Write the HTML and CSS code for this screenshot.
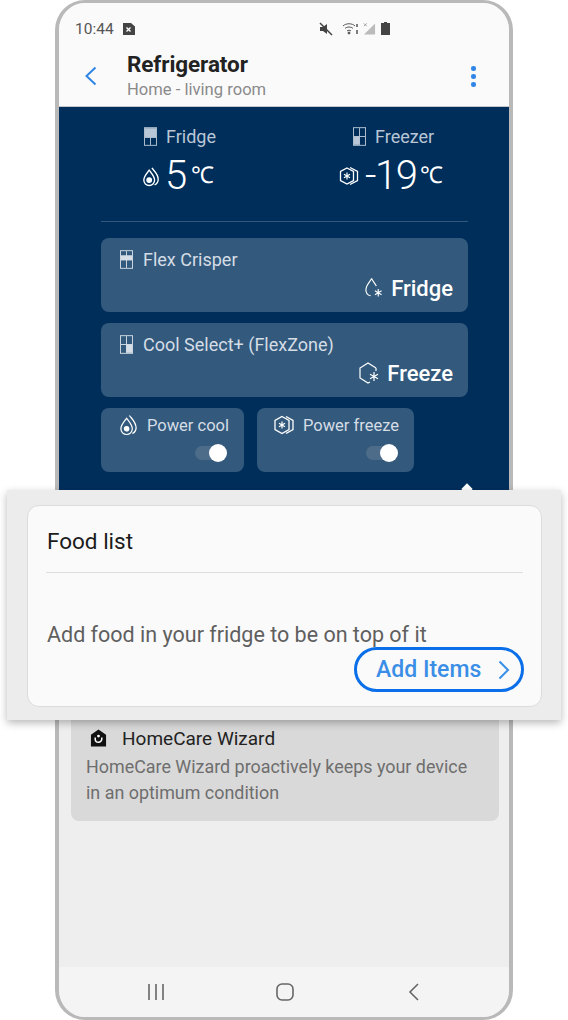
FILE: index.html
```html
<!DOCTYPE html>
<html lang="en">
<head>
<meta charset="utf-8">
<title>Refrigerator</title>
<link rel="stylesheet" href="styles.css">
</head>
<body>
<div class="stage">
  <div class="phone">
    <div class="top">
      <div class="status">
        <div class="status-left">
          <span class="clock">10:44</span>
          <svg class="ic-12" viewBox="0 0 12 12"><path d="M0 0h8l4 3.500V12H0z" fill="#444"/><path d="M3.500 4.500l4 4m0-4l-4 4" stroke="#fff" stroke-width="1.400"/></svg>
        </div>
        <div class="status-right">
          <svg class="ic-mute" viewBox="0 0 14 14"><path d="M1 5h3l4-3v10L4 9H1z" fill="#444"/><path d="M1 1l12 12" stroke="#444" stroke-width="1.500"/></svg>
          <svg class="ic-wifi" viewBox="0 0 18 13" fill="none" stroke="#555" stroke-width="1"><path d="M1 4c3-3 9-3 12 0M3 6.500c2-2 6-2 8 0M5 9c1-1 3-1 4 0"/><circle cx="7" cy="11" r="1" fill="#555"/><path d="M15 2v3M15 8v4" stroke-width="1.500"/></svg>
          <svg class="ic-signal" viewBox="0 0 14 13"><path d="M13 1v12H1z" fill="#bbb"/><path d="M1 1l3 3m0-3L1 4" stroke="#999"/></svg>
          <svg class="ic-batt" viewBox="0 0 9 13"><path d="M3 0h3v1h3v12H0V1h3z" fill="#444"/></svg>
        </div>
      </div>
      <div class="appbar">
        <svg class="back" viewBox="0 0 14 20" fill="none" stroke="#2f86e6" stroke-width="2"><path d="M11.500 1.500L2.500 10l9 8.500"/></svg>
        <div class="titles">
          <div class="title">Refrigerator</div>
          <div class="subtitle">Home - living room</div>
        </div>
        <div class="more"><i></i><i></i><i></i></div>
      </div>
    </div>

    <div class="navy">
      <div class="temps">
        <div class="temp temp-fridge">
          <div class="temp-label">
            <svg class="ic-door" viewBox="0 0 14 20"><rect x=".5" y=".5" width="13" height="19" fill="none" stroke="#b9c6d6"/><rect x="1" y="1" width="12" height="10" fill="#b9c6d6"/><path d="M7 11v8M1 11h12" stroke="#b9c6d6"/></svg>
            <span>Fridge</span>
          </div>
          <div class="temp-value">
            <svg class="ic-drop" viewBox="0 0 20 22" fill="none" stroke="#fff" stroke-width="1.500"><path d="M11 1.500c2 3 7 6.500 7 12.500a7 7 0 0 1-4 6.300"/><path d="M8 4c3 4 6 7 6 11a6 6 0 0 1-12 0c0-4 3-7 6-11z"/><circle cx="8" cy="15" r="2.500" fill="#fff"/></svg>
            <span class="num">5</span><span class="unit">℃</span>
          </div>
        </div>
        <div class="temp temp-freezer">
          <div class="temp-label">
            <svg class="ic-door" viewBox="0 0 14 20"><rect x=".5" y=".5" width="13" height="19" fill="none" stroke="#b9c6d6"/><rect x="1" y="10" width="6" height="9" fill="#b9c6d6"/><path d="M7 1v18M1 10h12" stroke="#b9c6d6"/></svg>
            <span>Freezer</span>
          </div>
          <div class="temp-value">
            <svg class="ic-hex" viewBox="0 0 20 20" fill="none" stroke="#fff" stroke-width="1.300"><path d="M8 2l6.500 3.500v9L8 18l-6.500-3.500v-9z"/><path d="M11 1.500l7.500 4v9l-7.500 4"/><path d="M8 6.500v7M5 8.200l6 3.600m0-3.600l-6 3.600" stroke-width="1.200"/></svg>
            <span class="num num-tight">-19</span><span class="unit">℃</span>
          </div>
        </div>
      </div>

      <div class="wide-card">
        <div class="card-label">
          <svg class="ic-door-sm" viewBox="0 0 14 20"><rect x=".5" y=".5" width="13" height="19" fill="none" stroke="#d5dde6"/><rect x="1" y="6" width="12" height="5" fill="#d5dde6"/><path d="M7 1v18M1 6h12" stroke="#d5dde6"/></svg>
          <span>Flex Crisper</span>
        </div>
        <div class="card-mode">
          <svg class="ic-mode" viewBox="0 0 20 22" fill="none" stroke="#fff" stroke-width="1.200"><path d="M8 1C6 5 2 8 2 13a6.500 6.500 0 0 0 5 6.200M8 1c1.500 3 3.500 5 5 8"/><path d="M15 12v8M11.500 14l7 4m0-4l-7 4"/></svg>
          <span>Fridge</span>
        </div>
      </div>

      <div class="wide-card">
        <div class="card-label">
          <svg class="ic-door-sm" viewBox="0 0 14 20"><rect x=".5" y=".5" width="13" height="19" fill="none" stroke="#d5dde6"/><rect x="7" y="10" width="6" height="9" fill="#d5dde6"/><path d="M7 1v18M1 10h12" stroke="#d5dde6"/></svg>
          <span>Cool Select+ (FlexZone)</span>
        </div>
        <div class="card-mode">
          <svg class="ic-mode-hex" viewBox="0 0 24 24" fill="none" stroke="#fff" stroke-width="1.200"><path d="M19 7l-8-5-8 5v10l8 5 2-1M19 7v3"/><path d="M17 11v9M13 13.300l8 4.500m0-4.500l-8 4.500"/></svg>
          <span>Freeze</span>
        </div>
      </div>

      <div class="small-cards">
        <div class="small-card small-cool">
          <div class="small-label">
            <svg class="ic-small-drop" viewBox="0 0 20 22" fill="none" stroke="#fff" stroke-width="1.300"><path d="M11 1c2 3 7 7 7 13a7 7 0 0 1-4 6"/><path d="M8 4c3 4 6 7 6 11a6 6 0 0 1-12 0c0-4 3-7 6-11z"/><circle cx="8" cy="15" r="2.300" fill="#fff"/></svg>
            <span>Power cool</span>
          </div>
          <div class="toggle"><i></i></div>
        </div>
        <div class="small-card small-freeze">
          <div class="small-label">
            <svg class="ic-small-hex" viewBox="0 0 22 20" fill="none" stroke="#fff" stroke-width="1.300"><path d="M9 1.500l7 4v9l-7 4-7-4v-9z"/><path d="M13 1.500l7 4v9l-7 4"/><path d="M9 6.500v7M6 8.200l6 3.600m0-3.600l-6 3.600" stroke-width="1.200"/></svg>
            <span>Power freeze</span>
          </div>
          <div class="toggle"><i></i></div>
        </div>
      </div>
    </div>

    <div class="lower">
      <div class="care">
        <div class="care-head">
          <svg class="ic-care" viewBox="0 0 18 18"><path d="M9 0l8 5.500V18H1V5.500z" fill="#111"/><path d="M5.500 8.500v1.500a3.500 3.500 0 0 0 7 0V8.500" fill="none" stroke="#fff" stroke-width="1.600"/><circle cx="9" cy="7" r="1.500" fill="#fff"/></svg>
          <span>HomeCare Wizard</span>
        </div>
        <p class="care-text">HomeCare Wizard proactively keeps your device in an optimum condition</p>
      </div>
    </div>

    <div class="navbar">
      <svg class="ic-nav" viewBox="0 0 18 18" fill="none" stroke="#666" stroke-width="1.600"><path d="M2 1v16M9 1v16M16 1v16"/></svg>
      <svg class="ic-nav" viewBox="0 0 18 18" fill="none" stroke="#666" stroke-width="1.600"><rect x="1" y="1" width="16" height="16" rx="5"/></svg>
      <svg class="ic-nav" viewBox="0 0 18 18" fill="none" stroke="#666" stroke-width="1.600"><path d="M13 1L5 9l8 8"/></svg>
    </div>
  </div>

  <div class="notch"></div>
  <div class="band">
    <div class="food">
      <div class="food-title">Food list</div>
      <p class="food-text">Add food in your fridge to be on top of it</p>
      <div class="add">
        <span>Add Items</span>
        <svg class="add-chev" viewBox="0 0 12 20" fill="none" stroke="#3a8ee6" stroke-width="2"><path d="M1.500 1.500L10 10l-8.500 8.500"/></svg>
      </div>
    </div>
  </div>
</div>
</body>
</html>
```
FILE: styles.css
```css
* { box-sizing: border-box; }
html, body { margin: 0; padding: 0; background: #fff; }
body { font-family: Roboto, "Liberation Sans", sans-serif; }
p { margin: 0; }
svg { display: block; flex: none; }

.stage { position: relative; width: 568px; height: 1020px; overflow: hidden; }

.phone {
  width: 458px; height: 1020px; margin-left: 55px;
  border: 3px solid #b9b9b9; border-left-width: 4px; border-right-width: 4px; border-radius: 30px;
  display: flex; flex-direction: column; overflow: hidden;
  background: #eeeeee;
}

.top { background: #fafafa; height: 104px; border-bottom: 1px solid #c4c8cc; padding: 0 23px 0 16px; flex: none; }
.status { display: flex; justify-content: space-between; align-items: center; height: 25px; margin-top: 13px; padding-right: 1px; }
.status-left { display: flex; align-items: center; gap: 9px; }
.clock { font-size: 15.500px; color: #555; }
.ic-12 { width: 12px; height: 12px; }
.status-right { display: flex; align-items: center; gap: 3px; margin-right: 95px; }
.ic-mute { width: 14px; height: 14px; margin-right: 6px; }
.ic-wifi { width: 18px; height: 13px; }
.ic-signal { width: 13px; height: 13px; }
.ic-batt { width: 9px; height: 13px; margin-left: 2px; }

.appbar { display: flex; align-items: flex-start; height: 62px; }
.back { width: 14px; height: 20px; margin: 25px 0 0 9px; }
.titles { margin-left: 29px; flex: 1; padding-top: 10px; }
.title { font-size: 22.500px; font-weight: 700; color: #222; line-height: 26px; letter-spacing: -.1px; }
.subtitle { font-size: 16.600px; color: #8a8a8a; line-height: 26px; }
.more { display: flex; flex-direction: column; gap: 3.500px; width: 5px; margin-top: 25px; margin-right: 10px; }
.more i { display: block; width: 4.500px; height: 4.500px; border-radius: 50%; background: #2f86e6; }

.navy { background: #002e5b; height: 383px; padding: 0 41px 0 42px; flex: none; }
.temps { display: flex; height: 115px; border-bottom: 1px solid #34587c; }
.temp-fridge { flex: none; width: 197px; margin-left: 41px; }
.temp-fridge .temp-label { margin-left: 2px; }
.temp-freezer .temp-label { margin-left: 14px; }
.temp-label { display: flex; align-items: center; gap: 9px; font-size: 18px; color: #b9c6d6; height: 20px; margin-top: 19px; }
.ic-door { width: 13px; height: 19px; }
.temp-value { display: flex; align-items: flex-start; color: #fff; margin-top: 5px; height: 46px; }
.ic-drop { width: 18px; height: 21px; margin: 15px 5px 0 0; }
.ic-hex { width: 20px; height: 20px; margin: 15px 6px 0 0; }
.num { font-size: 40px; font-weight: 300; line-height: 50px; }
.num-tight { letter-spacing: -1.500px; }
.unit { font-size: 23px; font-weight: 300; line-height: 50px; margin-left: 4px; }

.wide-card { height: 74px; background: #335a7c; border-radius: 8px; margin-top: 11px; padding: 11px 15px 0 19px; }
.temps + .wide-card { margin-top: 16px; }
.card-label { display: flex; align-items: center; gap: 10px; font-size: 18px; color: #d5dde6; height: 20px; }
.ic-door-sm { width: 13px; height: 19px; }
.card-mode { display: flex; justify-content: flex-end; align-items: center; gap: 8px; color: #fff; font-size: 22px; font-weight: 500; margin-top: 4px; height: 30px; }
.ic-mode { width: 19px; height: 22px; }
.ic-mode-hex { width: 24px; height: 24px; margin-right: -2px; }

.small-cards { display: flex; gap: 13px; margin-top: 11px; }
.small-card { height: 64px; background: #335a7c; border-radius: 8px; padding-top: 6px; }
.small-cool { width: 143px; }
.small-freeze { width: 157px; }
.small-label { display: flex; align-items: center; gap: 9px; font-size: 16.500px; color: #d5dde6; height: 22px; padding-left: 18px; }
.small-freeze .small-label { padding-left: 17px; }
.ic-small-drop { width: 19px; height: 22px; }
.ic-small-hex { width: 22px; height: 20px; margin: 0 -1px; }
.toggle { position: relative; width: 30px; height: 14px; background: #4d6c8a; border-radius: 7px; margin: 10px 19px 0 auto; }
.toggle i { position: absolute; right: -2px; top: -2px; width: 18px; height: 18px; border-radius: 50%; background: #fff; }
.small-freeze .toggle { margin-right: 18px; }

.lower { flex: 1; padding: 220px 10px 0 12px; background: #eeeeee; }
.care { background: #d9d9d9; border-radius: 0 0 8px 8px; height: 111px; padding: 16px 20px 0 15px; }
.care-head { display: flex; align-items: center; gap: 15px; font-size: 19px; color: #222; height: 24px; padding-left: 4px; }
.ic-care { width: 17px; height: 18px; }
.care-text { font-size: 17.900px; line-height: 25.500px; color: #6e6e6e; margin-top: 4px; }

.navbar { flex: none; height: 50px; background: #f4f4f4; display: flex; align-items: center; justify-content: space-between; padding: 0 86px 0 88px; }
.ic-nav { width: 18px; height: 18px; }

.notch { position: absolute; left: 463px; top: 485px; width: 8px; height: 8px; background: #fff; transform: rotate(45deg); }

.band {
  position: absolute; left: 7px; top: 490px; width: 554px; height: 230px;
  background: #ececec; padding: 15px 19px 13px 20px;
  box-shadow: 0 3px 8px rgba(0,0,0,.28);
}
.food {
  height: 202px; background: #fafafa; border: 1px solid #dcdcdc; border-radius: 12px;
  padding: 0 18px 0 18px;
}
.food-title { height: 67px; border-bottom: 1px solid #dedede; font-size: 22.500px; line-height: 70px; color: #1c1c1c; padding-left: 1px; }
.food-text { font-size: 21.500px; line-height: 26px; color: #5f5f5f; padding: 49px 0 0 1px; }
.add {
  display: flex; align-items: center; justify-content: space-between;
  width: 170px; height: 45px; margin: -1px -1px 0 auto;
  border: 3px solid #0a6fe8; border-radius: 23px;
  color: #3a8ee6; font-size: 23px; font-weight: 500; padding: 0 11px 0 19px;
}
.add-chev { width: 12px; height: 20px; }
```
